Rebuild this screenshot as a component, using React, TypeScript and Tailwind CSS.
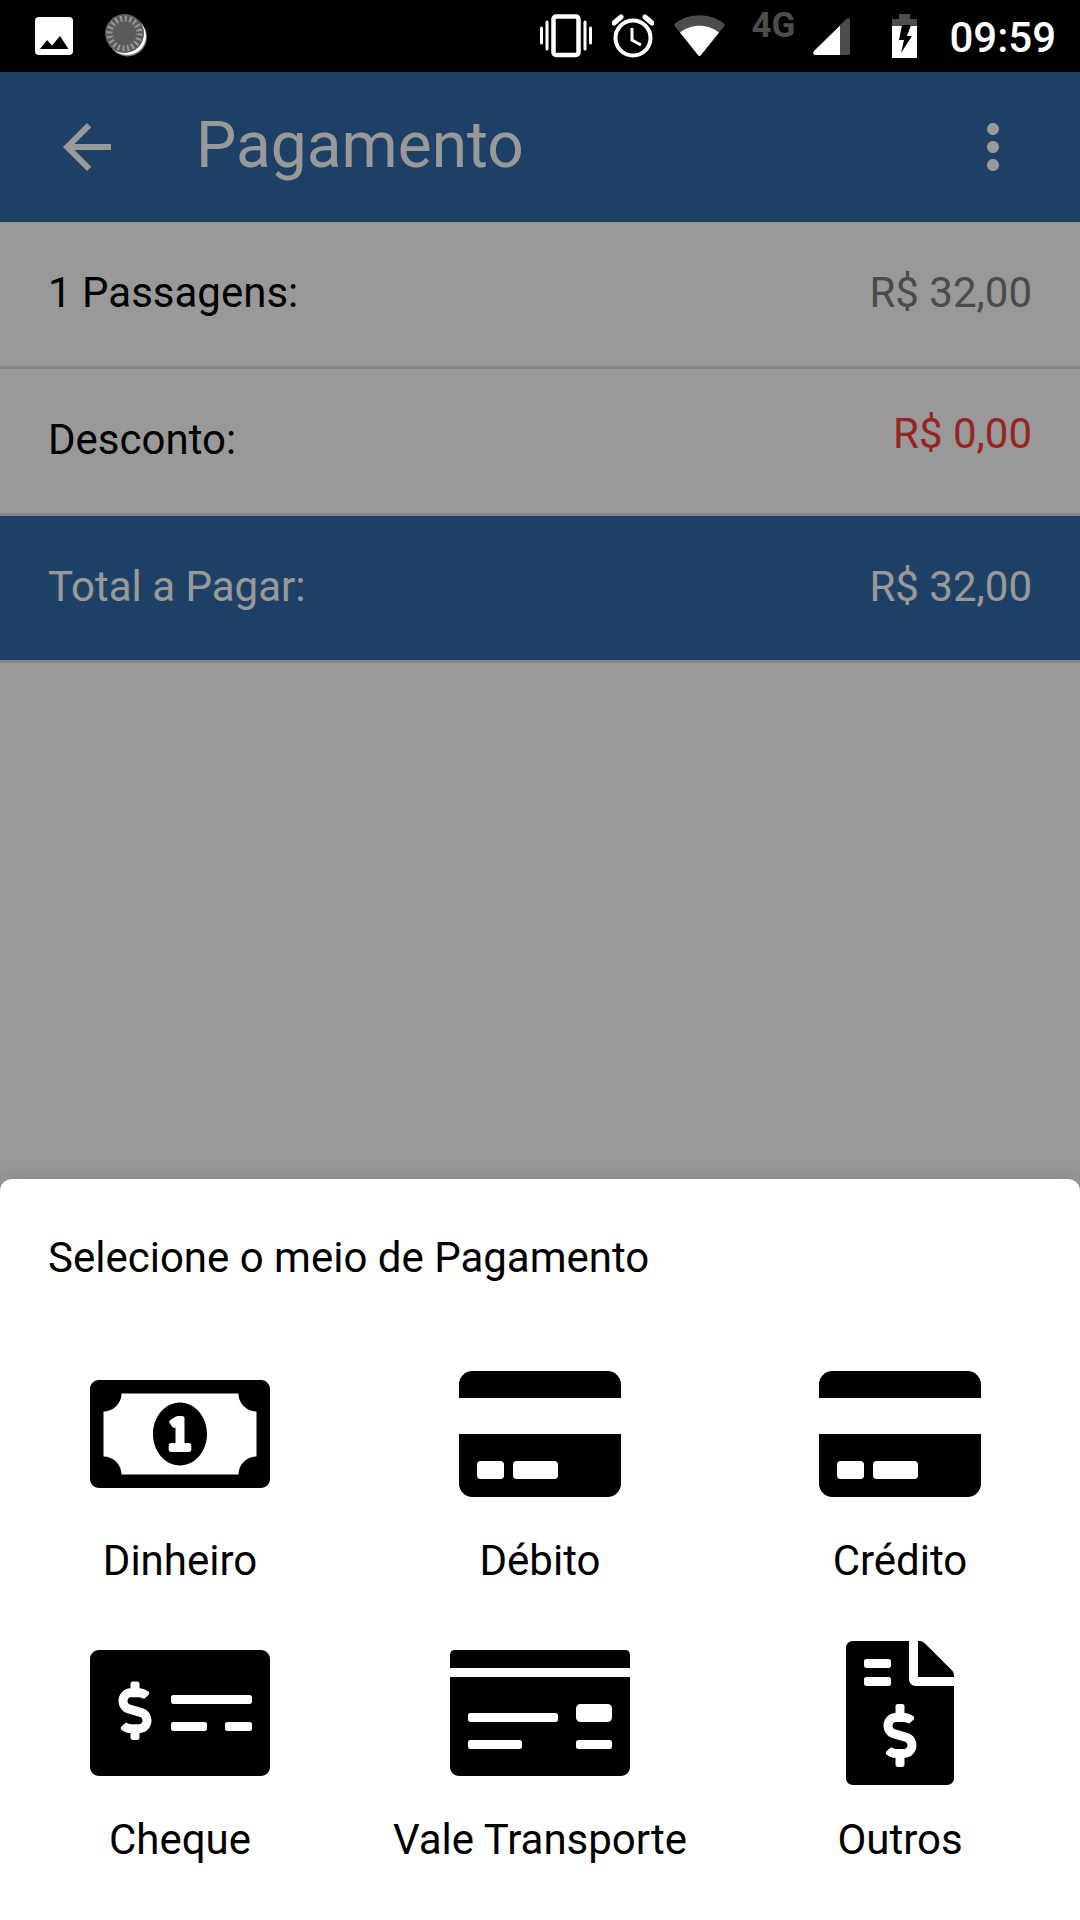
import type { ReactNode } from "react";
import type { IconType } from "react-icons";
import {
  FaCreditCard,
  FaFileInvoiceDollar,
  FaMoneyCheck,
  FaMoneyCheckAlt,
  FaRegMoneyBillAlt,
} from "react-icons/fa";
import { MdArrowBack, MdMoreVert } from "react-icons/md";

const methods: { label: string; icon: IconType }[] = [
  { label: "Dinheiro", icon: FaRegMoneyBillAlt },
  { label: "Débito", icon: FaCreditCard },
  { label: "Crédito", icon: FaCreditCard },
  { label: "Cheque", icon: FaMoneyCheckAlt },
  { label: "Vale Transporte", icon: FaMoneyCheck },
  { label: "Outros", icon: FaFileInvoiceDollar },
];

function PictureIcon() {
  return (
    <svg width="38" height="38" viewBox="0 0 38 38" aria-hidden="true">
      <rect width="38" height="38" rx="4" fill="#fff" />
      <path d="M5 32 12 23l5 5.500L25 19l8.500 13z" fill="#000" />
    </svg>
  );
}

function SpinnerIcon() {
  return (
    <svg width="44" height="44" viewBox="0 0 44 44" aria-hidden="true">
      <circle cx="22.500" cy="23" r="19.500" fill="#777" />
      <circle cx="22" cy="22" r="19" fill="#fff" />
      <circle cx="19.500" cy="19.500" r="19.500" fill="#5a5a5a" />
      <circle
        cx="19.500"
        cy="19.500"
        r="15"
        fill="none"
        stroke="#999"
        strokeWidth="6"
        strokeDasharray="2 2.700"
      />
    </svg>
  );
}

function VibrateIcon() {
  return (
    <svg width="52" height="44" viewBox="0 0 52 44" fill="none" stroke="#fff" aria-hidden="true">
      <rect x="13.500" y="2.500" width="25" height="38.500" rx="2.500" strokeWidth="4.500" />
      <path d="M7 8v27M45 8v27M1.500 14v15M50.500 14v15" strokeWidth="3" strokeLinecap="round" />
    </svg>
  );
}

function AlarmIcon() {
  return (
    <svg width="42" height="44" viewBox="0 0 42 44" fill="none" stroke="#fff" aria-hidden="true">
      <circle cx="21" cy="24" r="17.500" strokeWidth="4" />
      <path d="M20 14v12l9 5" strokeWidth="3" />
      <path d="M2 9l7-6M40 9l-7-6" strokeWidth="5" strokeLinecap="round" />
    </svg>
  );
}

function WifiIcon() {
  return (
    <svg width="51" height="42" viewBox="0 0 51 42" aria-hidden="true">
      <path
        d="M1 8.500C15-2.500 36-2.500 50 8.500q1.500 1.500 0 3L27 40q-1.500 2-3 0L1 11.500q-1.500-1.500 0-3z"
        fill="#4d4d4d"
      />
      <path d="M6 17.500C17 8.500 34 8.500 45 17.500L27 40q-1.500 2-3 0z" fill="#fff" />
    </svg>
  );
}

function SignalIcon() {
  return (
    <svg width="37" height="37" viewBox="0 0 37 37" aria-hidden="true">
      <path d="M34 .5q3-1.500 3 2V35q0 2-2 2H27V7z" fill="#4d4d4d" />
      <path d="M27 7.500V37H2q-3-.5-1-4z" fill="#fff" />
    </svg>
  );
}

function BatteryIcon() {
  return (
    <svg width="25" height="44" viewBox="0 0 25 44" aria-hidden="true">
      <path d="M7 0h11v5h7v8H0V5h7z" fill="#4d4d4d" />
      <path d="M0 12h25v32H0z" fill="#fff" />
      <path d="M10 11h9l-4 11h5L9 39l3-13H7z" fill="#000" />
    </svg>
  );
}

function StatusBar() {
  return (
    <div className="flex h-[72px] items-center justify-between bg-black pr-6 pl-[35px] text-white">
      <div className="flex items-center gap-8">
        <PictureIcon />
        <SpinnerIcon />
      </div>
      <div className="flex items-center">
        <div className="flex items-center gap-5">
          <VibrateIcon />
          <AlarmIcon />
          <WifiIcon />
        </div>
        <span className="ml-[26px] self-start text-[35px] leading-[34px] font-bold text-[#4d4d4d]">4G</span>
        <div className="ml-[18px] flex items-center gap-[42px]">
          <SignalIcon />
          <BatteryIcon />
        </div>
        <time className="ml-8 pt-1 text-[42px] leading-[50px] font-medium">09:59</time>
      </div>
    </div>
  );
}

function SummaryRow({
  label,
  className = "",
  children,
}: {
  label: string;
  className?: string;
  children: ReactNode;
}) {
  return (
    <div
      className={`flex h-[147px] items-center justify-between border-b-3 border-[#dedede] px-12 pb-0.5 ${className}`}
    >
      <dt>{label}</dt>
      {children}
    </div>
  );
}

export default function App() {
  return (
    <div className="flex min-h-screen flex-col bg-white font-['Roboto',sans-serif] text-[42px] leading-[50px] text-black">
      <StatusBar />
      <div className="grid flex-1">
        <main className="[grid-area:1/1]">
          <header className="flex h-[150px] items-center bg-[#346caa] px-[51px] text-white">
            <button type="button" aria-label="Voltar">
              <MdArrowBack size={72} />
            </button>
            <h1 className="ml-[73px] flex-1 pb-0.5 text-[64px] leading-[74px]">Pagamento</h1>
            <button type="button" aria-label="Mais opções">
              <MdMoreVert size={72} />
            </button>
          </header>
          <dl>
            <SummaryRow label="1 Passagens:">
              <dd className="text-[#7d7d7d]">R$ 32,00</dd>
            </SummaryRow>
            <SummaryRow label="Desconto:">
              <dd className="pb-3 text-[#fb3e38]">R$ 0,00</dd>
            </SummaryRow>
            <SummaryRow label="Total a Pagar:" className="bg-[#346caa] text-white">
              <dd>R$ 32,00</dd>
            </SummaryRow>
          </dl>
        </main>
        <div className="z-10 flex flex-col justify-end bg-black/40 [grid-area:1/1]">
          <section
            role="dialog"
            aria-labelledby="sheet-title"
            className="rounded-t-xl bg-white pt-[54px] shadow-[0_0_24px_rgba(0,0,0,0.15)]"
          >
            <h2 id="sheet-title" className="px-12">
              Selecione o meio de Pagamento
            </h2>
            <div className="mt-[79px] grid grid-cols-3">
              {methods.map(({ label, icon: Icon }) => (
                <button key={label} type="button" className="flex flex-col items-center gap-[30px] pb-[55px]">
                  <Icon className="h-36 w-[180px]" />
                  <span>{label}</span>
                </button>
              ))}
            </div>
          </section>
        </div>
      </div>
    </div>
  );
}
